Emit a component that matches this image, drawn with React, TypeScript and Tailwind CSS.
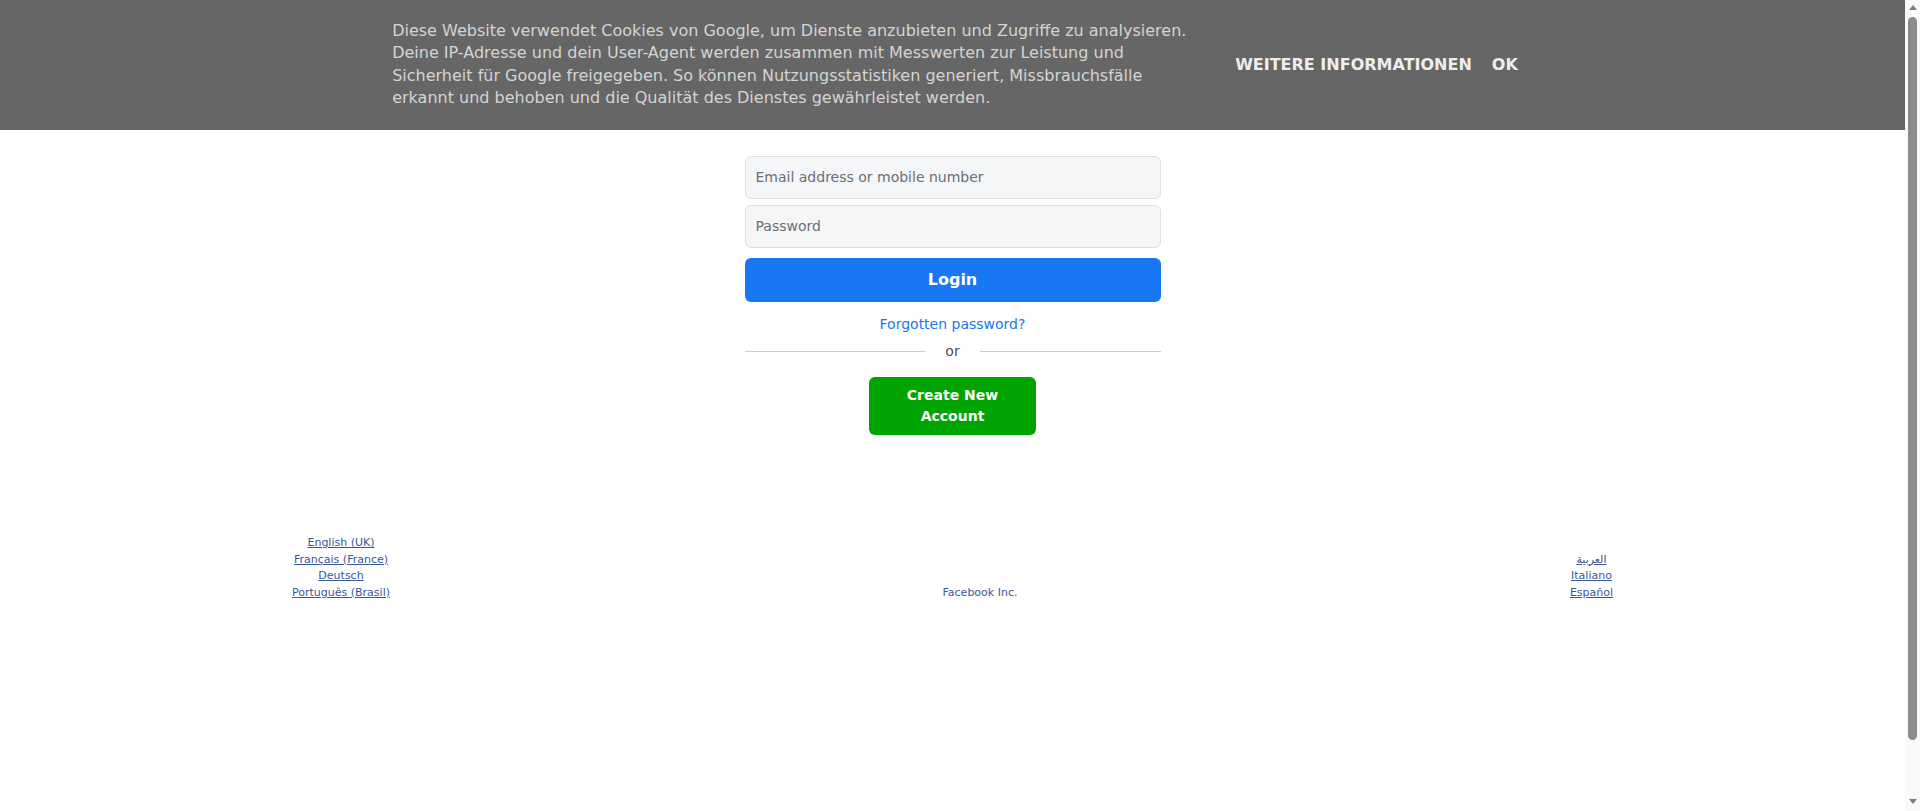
export default function App() {
  const dv = { fontFamily: '"DejaVu Sans", sans-serif' };
  return (
    <div className="h-[811px] overflow-hidden flex bg-white" style={dv}>
      <div className="flex-1 min-h-[880px]">
        <div className="h-[130px] bg-[#666666] flex justify-center pl-[5px]">
          <div className="w-[800px] pt-[20px] text-[16px] leading-[22.4px] text-[#d4d4d4]">
            Diese Website verwendet Cookies von Google, um Dienste anzubieten und Zugriffe zu analysieren. Deine IP-Adresse und dein User-Agent werden zusammen mit Messwerten zur Leistung und Sicherheit für Google freigegeben. So können Nutzungsstatistiken generiert, Missbrauchsfälle erkannt und behoben und die Qualität des Dienstes gewährleistet werden.
          </div>
          <div className="ml-[43px] flex items-center gap-[20px] text-[16px] font-bold text-[#eeeeee] pb-[1px]">
            <span>WEITERE INFORMATIONEN</span>
            <span>OK</span>
          </div>
        </div>

        <div className="w-[416px] mx-auto mt-[26px] flex flex-col">
          <div className="h-[43px] rounded-[6px] border border-[#dddfe2] bg-[#f5f6f7] px-[10px] flex items-center text-[14px] text-[#6b6f76]">
            Email address or mobile number
          </div>
          <div className="mt-[6px] h-[43px] rounded-[6px] border border-[#dddfe2] bg-[#f5f6f7] px-[10px] flex items-center text-[14px] text-[#6b6f76]">
            Password
          </div>
          <div className="mt-[10px] h-[44px] rounded-[6px] bg-[#1877f2] flex items-center justify-center text-[16px] font-bold text-white">
            Login
          </div>
          <div className="mt-[13px] text-center text-[14px] leading-[18px] text-[#1877f2]">
            Forgotten password?
          </div>
          <div className="mt-[9px] flex items-center">
            <div className="flex-1 h-px bg-[#c9ccd1]"></div>
            <div className="px-[20px] text-[14px] leading-[18px] text-[#4b4f56]">or</div>
            <div className="flex-1 h-px bg-[#c9ccd1]"></div>
          </div>
          <div className="mt-[17px] flex justify-center">
            <div className="w-[167px] h-[58px] rounded-[6px] bg-[#00a400] flex items-center justify-center text-center text-[14px] leading-[21px] font-bold text-white">
              Create New
              <br />
              Account
            </div>
          </div>
        </div>

        <div className="mt-[100px] flex items-end text-[11px] leading-[16.6px] text-[#385898]">
          <div className="w-[682px] flex flex-col items-center">
            <span className="underline">English (UK)</span>
            <span className="underline">Français (France)</span>
            <span className="underline">Deutsch</span>
            <span className="underline">Português (Brasil)</span>
          </div>
          <div className="w-[596px] flex flex-col items-center">
            <span>Facebook Inc.</span>
          </div>
          <div className="flex-1 flex flex-col items-center">
            <span className="underline">العربية</span>
            <span className="underline">Italiano</span>
            <span className="underline">Español</span>
          </div>
        </div>
      </div>

      <div className="w-[15px] h-[811px] bg-[#fafafa] flex flex-col items-center">
        <div className="mt-[5px] w-0 h-0 border-l-[4px] border-r-[4px] border-b-[5px] border-l-transparent border-r-transparent border-b-[#7c7c7c]"></div>
        <div className="mt-[7px] w-[9px] h-[723px] rounded-full bg-[#8c8c8c]"></div>
        <div className="mt-[59px] w-0 h-0 border-l-[4px] border-r-[4px] border-t-[5px] border-l-transparent border-r-transparent border-t-[#7c7c7c]"></div>
      </div>
    </div>
  );
}
